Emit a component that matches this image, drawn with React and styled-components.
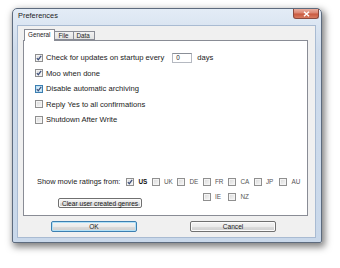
import React from "react";
import styled, { createGlobalStyle } from "styled-components";

const GlobalStyle = createGlobalStyle`
  html, body {
    margin: 0;
    padding: 0;
    background: #ffffff;
  }
  body {
    font-family: "Liberation Sans", Arial, sans-serif;
  }
`;

const Page = styled.div`
  width: 340px;
  height: 268px;
  padding: 8px 0 0 12px;
  box-sizing: border-box;
`;

const Window = styled.div`
  width: 310px;
  height: 235px;
  box-sizing: border-box;
  border: 1px solid #5d6b7e;
  border-radius: 5px 5px 2px 2px;
  background: linear-gradient(#e3ecf6, #cfdcec 40px, #c9d8ea);
  box-shadow: 2px 3px 7px 1px rgba(0, 0, 0, 0.5);
  padding: 0 5px 4px 4px;
  display: flex;
  flex-direction: column;
`;

const TitleBar = styled.div`
  height: 16px;
  display: flex;
  align-items: flex-start;
  justify-content: space-between;
`;

const Title = styled.span`
  font-size: 7.4px;
  color: #1b1b1b;
  line-height: 14px;
  padding-left: 1px;
`;

const CloseButton = styled.div`
  width: 26px;
  height: 10px;
  margin-right: -3px;
  box-sizing: border-box;
  border: 1px solid #8a4a3f;
  border-top: none;
  border-radius: 0 0 3px 3px;
  background: linear-gradient(#eab0a2, #dc8470 45%, #c95a40 55%, #d87a60);
  display: flex;
  align-items: center;
  justify-content: center;
`;

const Client = styled.div`
  flex: 1;
  background: #f0f0f0;
  border: 1px solid #a9bbd2;
  padding: 3px 7px 5px 5px;
  display: flex;
  flex-direction: column;
`;

const TabStrip = styled.div`
  height: 11px;
  display: flex;
  align-items: flex-end;
  padding-left: 1px;
`;

const Tab = styled.div`
  height: ${(p) => (p.$active ? "12px" : "9px")};
  margin-bottom: ${(p) => (p.$active ? "-1px" : "0")};
  box-sizing: border-box;
  border: 1px solid #898c95;
  border-bottom: ${(p) => (p.$active ? "none" : "1px solid #898c95")};
  border-left: ${(p) => (p.$first ? "1px solid #898c95" : "none")};
  background: ${(p) =>
    p.$active ? "#ffffff" : "linear-gradient(#f2f2f2, #e3e3e3)"};
  font-size: 6.3px;
  color: #222;
  padding: 0 4px 0 3px;
  padding-top: ${(p) => (p.$active ? "1px" : "0")};
  display: flex;
  align-items: ${(p) => (p.$active ? "flex-start" : "center")};
  position: relative;
  z-index: ${(p) => (p.$active ? 1 : 0)};
`;

const Panel = styled.div`
  flex: 1;
  background: #ffffff;
  border: 1px solid #898c95;
  padding: 9px 10px 7px 11px;
  display: flex;
  flex-direction: column;
`;

const Options = styled.div`
  display: flex;
  flex-direction: column;
`;

const Row = styled.div`
  height: 15.5px;
  display: flex;
  align-items: center;
  font-size: 7.6px;
  color: #1a1a1a;
  white-space: nowrap;
`;

const Box = styled.span`
  width: 8px;
  height: 8px;
  flex: none;
  box-sizing: border-box;
  border: 1px solid ${(p) => (p.$hot ? "#3c7fb1" : "#8f8f8f")};
  background: ${(p) =>
    p.$hot
      ? "linear-gradient(135deg, #cbe9f8, #e8f6fd)"
      : "linear-gradient(135deg, #d8d8d8, #f8f8f8)"};
  box-shadow: inset 0 0 0 1px ${(p) => (p.$hot ? "#bfe0f4" : "#f4f4f4")};
  margin-right: ${(p) => p.$gap || 3}px;
  display: flex;
  align-items: center;
  justify-content: center;
`;

const DaysInput = styled.span`
  width: 20px;
  height: 10px;
  box-sizing: border-box;
  border: 1px solid #b5b9c1;
  border-top-color: #8a8f97;
  background: #fff;
  font-size: 6.4px;
  line-height: 8px;
  padding-left: 3px;
  margin: 0 5px 0 8px;
`;

const Spacer = styled.div`
  flex: 1;
`;

const Ratings = styled.div`
  display: grid;
  grid-template-columns: max-content repeat(7, 25.5px);
  grid-template-rows: 15px auto;
  padding-left: 2px;
`;

const Label = styled.div`
  display: flex;
  align-items: center;
  padding-right: 6px;
  font-size: 7.4px;
  color: #1a1a1a;
  white-space: nowrap;
`;

const Country = styled.div`
  grid-column: ${(p) => p.$col || "auto"};
  grid-row: ${(p) => p.$row || "auto"};
  height: 15px;
  display: flex;
  align-items: center;
  font-size: 6.4px;
  color: ${(p) => (p.$on ? "#111" : "#555")};
  font-weight: ${(p) => (p.$on ? 700 : 400)};
`;

const ClearCell = styled.div`
  grid-column: 1 / 4;
  grid-row: 2;
  padding: 9px 0 0 21px;
`;

const Button = styled.div`
  width: ${(p) => p.$w}px;
  height: ${(p) => p.$h || 11}px;
  box-sizing: border-box;
  border: 1px solid ${(p) => (p.$default ? "#3c7fb1" : "#707070")};
  border-radius: 2px;
  background: linear-gradient(#f4f4f4, #ebebeb 50%, #dddddd 51%, #cfcfcf);
  box-shadow: inset 0 0 0 1px ${(p) => (p.$default ? "#b2e1f7" : "#fbfbfb")};
  font-size: 6.6px;
  color: #1a1a1a;
  display: flex;
  align-items: center;
  justify-content: center;
  white-space: nowrap;
`;

const Footer = styled.div`
  display: flex;
  padding: 5px 0 0 28px;
  gap: 53px;
`;

const Check = () => (
  <svg width="6" height="6" viewBox="0 0 6 6">
    <path
      d="M0.8 3.1 L2.3 4.7 L5.2 0.9"
      fill="none"
      stroke="#3d4f7a"
      strokeWidth="1.2"
    />
  </svg>
);

const CheckRow = ({ checked, hot, children }) => (
  <Row>
    <Box $hot={hot}>{checked && <Check />}</Box>
    {children}
  </Row>
);

const countries = [
  { code: "US", on: true },
  { code: "UK" },
  { code: "DE" },
  { code: "FR" },
  { code: "CA" },
  { code: "JP" },
  { code: "AU" },
  { code: "IE", col: 5, row: 2 },
  { code: "NZ", col: 6, row: 2 },
];

export default function App() {
  return (
    <Page>
      <GlobalStyle />
      <Window>
        <TitleBar>
          <Title>Preferences</Title>
          <CloseButton>
            <svg width="7" height="6" viewBox="0 0 7 6">
              <path
                d="M1 0.8 L6 5.2 M6 0.8 L1 5.2"
                stroke="#ffffff"
                strokeWidth="1.5"
              />
            </svg>
          </CloseButton>
        </TitleBar>
        <Client>
          <TabStrip>
            <Tab $active $first>
              General
            </Tab>
            <Tab>File</Tab>
            <Tab>Data</Tab>
          </TabStrip>
          <Panel>
            <Options>
              <CheckRow checked>
                Check for updates on startup every
                <DaysInput>0</DaysInput>
                days
              </CheckRow>
              <CheckRow checked>Moo when done</CheckRow>
              <CheckRow checked hot>
                Disable automatic archiving
              </CheckRow>
              <CheckRow>Reply Yes to all confirmations</CheckRow>
              <CheckRow>Shutdown After Write</CheckRow>
            </Options>
            <Spacer />
            <Ratings>
              <Label>Show movie ratings from:</Label>
              {countries.map((c) => (
                <Country key={c.code} $on={c.on} $col={c.col} $row={c.row}>
                  <Box $gap={4}>{c.on && <Check />}</Box>
                  {c.code}
                </Country>
              ))}
              <ClearCell>
                <Button $w={84} $h={10}>
                  Clear user created genres
                </Button>
              </ClearCell>
            </Ratings>
          </Panel>
          <Footer>
            <Button $w={86} $default>
              OK
            </Button>
            <Button $w={86}>Cancel</Button>
          </Footer>
        </Client>
      </Window>
    </Page>
  );
}
